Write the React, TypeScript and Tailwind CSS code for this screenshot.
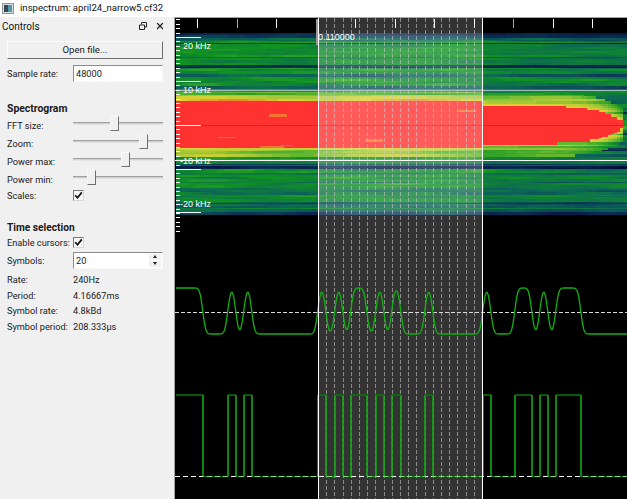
import React, { useMemo } from 'react';
import { X } from 'lucide-react';

const W = 452;
const H = 481;
// everything in the plot is in page coords minus this origin
const OX = 175;
const OY = 18;

const SEL_START = 318;
const SEL_END = 482;
const SYMBOLS = 20;

const EDGES = [203, 228, 236, 244, 252, 318, 326, 335, 343, 351, 367, 376, 384, 392, 401, 425, 433, 483, 491, 515, 532, 540, 548, 556, 581];

const STOPS: [number, number[]][] = [
  [0, [2, 6, 50]],
  [0.2, [10, 50, 85]],
  [0.36, [12, 100, 88]],
  [0.5, [16, 145, 35]],
  [0.62, [75, 175, 45]],
  [0.72, [165, 200, 55]],
  [0.82, [225, 210, 50]],
  [0.91, [240, 130, 50]],
  [1, [255, 50, 50]],
];

function colour(p: number) {
  const v = Math.max(0, Math.min(1, p));
  for (let i = 1; i < STOPS.length; i++) {
    if (v <= STOPS[i][0]) {
      const [a, ca] = STOPS[i - 1];
      const [b, cb] = STOPS[i];
      const t = (v - a) / (b - a);
      const c = ca.map((n, k) => Math.round(n + (cb[k] - n) * t));
      return `rgb(${c[0]},${c[1]},${c[2]})`;
    }
  }
  return 'rgb(255,50,50)';
}

function makeRandom(seed: number) {
  let s = seed;
  return () => {
    s = (s + 0x6d2b79f5) | 0;
    let t = Math.imul(s ^ (s >>> 15), 1 | s);
    t = (t + Math.imul(t ^ (t >>> 7), 61 | t)) ^ t;
    return ((t ^ (t >>> 14)) >>> 0) / 4294967296;
  };
}

function coreWidth(x: number) {
  if (x < 480) return 23;
  const t = Math.min(1, (x - 480) / 143);
  return 19 * Math.pow(Math.max(0, 1 - Math.pow(t, 5)), 0.7) + (t < 1 ? 0 : -8);
}

function buildSpectrogram() {
  const rnd = makeRandom(424);
  const byColour: Record<string, string> = {};
  let y = 33;
  while (y < 213) {
    const pick = rnd();
    const dark = pick >= 0.82;
    const h = dark ? (rnd() < 0.6 ? 1 : 2) : rnd() < 0.25 ? 1 : rnd() < 0.6 ? 2 : 3;
    let base = pick < 0.6 ? 0.46 + rnd() * 0.05 : pick < 0.82 ? 0.34 + rnd() * 0.08 : 0.14 + rnd() * 0.12;
    const edge = Math.min(1, Math.min(y - 33, 213 - y) / 6);
    base *= 0.3 + 0.7 * edge;
    const ph1 = rnd() * 6.28;
    const ph2 = rnd() * 6.28;
    const amp = 0.02 + rnd() * 0.03;
    const drop = rnd() < 0.25 ? 0.12 : 0;
    const jitter = (rnd() - 0.5) * 0.3;
    const streakAt = 190 + rnd() * 280;
    const streakLen = 4 + rnd() * 12;
    const hasStreak = rnd() < 0.3;
    const dy = Math.abs(y + h / 2 - 125);
    for (let x = 176; x < 627; x += 3) {
      let p = base + amp * Math.sin(x / 37 + ph1) + amp * 0.7 * Math.sin(x / 13 + ph2);
      if (x > 482) p -= 0.03 + (x - 482) * 0.0002;
      const w = coreWidth(x);
      const glow = w + 13;
      let sig = 0;
      if (dy < w) {
        sig = 1;
        // thin orange streaks run through the outer part of the core
        if (hasStreak && dy > 8 && Math.abs(x - streakAt) < streakLen) sig = 0.93;
      } else if (dy < glow) {
        sig = 0.82 - drop - ((dy - w) / 13) * 0.28 + jitter * (0.5 + 0.5 * Math.sin(x / 29 + ph1));
      }
      p = Math.max(p, sig);
      const c = colour(Math.round(p * 40) / 40);
      byColour[c] = (byColour[c] || '') + `M${x - OX} ${y - OY}h3v${h}h-3z`;
    }
    y += h;
  }
  return byColour;
}

function levelAt(x: number) {
  let high = true;
  for (const e of EDGES) {
    if (x >= e) high = !high;
  }
  return high ? 1 : -1;
}

function buildAnalog() {
  const sigma = 2.4;
  let d = '';
  for (let x = 176; x <= 627; x += 0.5) {
    let sum = 0;
    let weight = 0;
    for (let o = -8; o <= 8; o += 0.5) {
      const g = Math.exp(-(o * o) / (2 * sigma * sigma));
      sum += levelAt(x + o) * g;
      weight += g;
    }
    const v = sum / weight;
    const py = 311 - v * 23;
    d += `${d ? 'L' : 'M'}${x - OX} ${py - OY}`;
  }
  return d;
}

function Plot() {
  const spectrogram = useMemo(buildSpectrogram, []);
  const analog = useMemo(buildAnalog, []);

  const rulerTicks = Array.from({ length: 11 }, (_, i) => 197 + i * 39.5);
  const axisTicks = Array.from({ length: 49 }, (_, i) => 19.4 + i * 4.4);
  const majors = [37, 81, 125, 169, 212];
  const symbols = Array.from({ length: SYMBOLS - 1 }, (_, i) => SEL_START + (i + 1) * ((SEL_END - SEL_START) / SYMBOLS));

  const all = [176, ...EDGES, 627];
  const highs: string[] = [];
  const lows: string[] = [];
  const verts: string[] = [];
  all.slice(0, -1).forEach((x, i) => {
    const next = all[i + 1];
    const yy = (i % 2 === 0 ? 395 : 476.5) - OY;
    (i % 2 === 0 ? highs : lows).push(`M${x - OX} ${yy}L${next - OX} ${yy}`);
    if (i < all.length - 2) verts.push(`M${next - OX} ${395 - OY}L${next - OX} ${476.5 - OY}`);
  });

  return (
    <svg width={W} height={H} viewBox={`0 0 ${W} ${H}`} className="block bg-black font-['Liberation_Sans',sans-serif]">
      <g shapeRendering="crispEdges">
        {Object.entries(spectrogram).map(([c, d]) => (
          <path key={c} d={d} fill={c} />
        ))}
        <rect x={0} y={125 - OY} width={W} height={1} fill="#f01818" />
      </g>

      {/* time selection */}
      <rect x={SEL_START - OX} y={0} width={SEL_END - SEL_START} height={H} fill="#fff" fillOpacity={0.2} />
      <g shapeRendering="crispEdges">
        {symbols.map((x) => (
          <line key={x} x1={Math.round(x) - OX + 0.5} x2={Math.round(x) - OX + 0.5} y1={0} y2={H} stroke="#c8c8c8" strokeOpacity={0.6} strokeDasharray="4 2" />
        ))}
      </g>

      <g shapeRendering="crispEdges">
        <line x1={0} x2={W} y1={312.5 - OY} y2={312.5 - OY} stroke="#d8d8d8" strokeDasharray="4 2" />
        <line x1={0} x2={W} y1={476.5 - OY} y2={476.5 - OY} stroke="#fff" strokeDasharray="5 3" />
      </g>

      {/* traces */}
      <path d={analog} fill="none" stroke="#12b012" strokeWidth={1.3} />
      <g fill="none">
        <path d={verts.join('')} stroke="#12a812" strokeWidth={1.6} />
        <path d={highs.join('')} stroke="#0d760d" strokeWidth={1.6} />
        <path d={lows.join('')} stroke="#25d025" strokeOpacity={0.6} strokeWidth={1.2} />
      </g>
      <g shapeRendering="crispEdges">
        <line x1={0} x2={W} y1={90.5 - OY} y2={90.5 - OY} stroke="#b8c4d8" strokeOpacity={0.85} />
        <line x1={0} x2={W} y1={160.5 - OY} y2={160.5 - OY} stroke="#fff" />
        <line x1={SEL_START + 0.5 - OX} x2={SEL_START + 0.5 - OX} y1={0} y2={H} stroke="#fff" />
        <line x1={SEL_END + 0.5 - OX} x2={SEL_END + 0.5 - OX} y1={0} y2={H} stroke="#fff" />
      </g>

      {/* axes */}
      <g shapeRendering="crispEdges" stroke="#fff">
        {rulerTicks.map((x) => (
          <line key={x} x1={Math.round(x) - OX + 0.5} x2={Math.round(x) - OX + 0.5} y1={1} y2={10} stroke={x === 236.5 || x === 513 ? '#aaa' : '#fff'} />
        ))}
        <line x1={316.5 - OX} x2={316.5 - OX} y1={1} y2={27} stroke="#9a9a9a" strokeWidth={2} />
        {axisTicks.map((y) => (
          <line key={y} x1={1} x2={5} y1={Math.round(y) - OY + 0.5} y2={Math.round(y) - OY + 0.5} />
        ))}
        {majors.map((y) => (
          <line key={y} x1={1} x2={26} y1={y - OY + 0.5} y2={y - OY + 0.5} />
        ))}
      </g>
      <g fill="#fff" fontSize={9}>
        <text x={143} y={22}>0.110000</text>
        <text x={8} y={31}>20 kHz</text>
        <text x={8} y={75}>10 kHz</text>
        <text x={5} y={146}>-10 kHz</text>
        <text x={5} y={189}>-20 kHz</text>
      </g>
    </svg>
  );
}

const sunken = 'border border-t-[#8a8a8a] border-l-[#8a8a8a] border-r-[#f8f8f8] border-b-[#f8f8f8] bg-white';

function Row({ label, className, children, labelClass = 'pt-[1px]' }: { label: string; className: string; children?: React.ReactNode; labelClass?: string }) {
  return (
    <div className={`grid grid-cols-[66px_90px] items-center ${className}`}>
      <span className={`whitespace-nowrap ${labelClass}`}>{label}</span>
      {children}
    </div>
  );
}

function Slider({ label, thumb }: { label: string; thumb: number }) {
  return (
    <Row label={label} className="h-[18px]" labelClass="pt-[3px]">
      <div className="relative h-full">
        <div className="absolute inset-x-0 top-[7px] h-[3px] border-t border-t-[#a0a0a0] border-b border-b-[#e4e4e4] bg-[#d0d0d0]" />
        <div
          className="absolute top-[1px] h-[15px] w-[9px] border border-t-[#f8f8f8] border-l-[#f8f8f8] border-r-[#707070] border-b-[#707070] bg-[#f0f0f0]"
          style={{ left: thumb - 73 - 4 }}
        />
      </div>
    </Row>
  );
}

function Check() {
  return (
    <div className="flex h-[11px] w-[11px] items-center justify-center border border-t-[#7a7a7a] border-l-[#7a7a7a] border-r-[#d8d8d8] border-b-[#d8d8d8] bg-[#f6f6f6]">
      <svg width="9" height="9" viewBox="0 0 9 9">
        <path d="M1.2 4.2 L3.5 6.8 L7.8 1.4" fill="none" stroke="#111" strokeWidth="1.7" />
      </svg>
    </div>
  );
}

const SLIDERS = [
  { label: 'FFT size:', thumb: 114 },
  { label: 'Zoom:', thumb: 143 },
  { label: 'Power max:', thumb: 125 },
  { label: 'Power min:', thumb: 91 },
];

const INFO = [
  { label: 'Rate:', value: '240Hz' },
  { label: 'Period:', value: '4.16667ms' },
  { label: 'Symbol rate:', value: '4.8kBd' },
  { label: 'Symbol period:', value: '208.333µs' },
];

export default function App() {
  return (
    <div className="flex h-[499px] w-[627px] flex-col overflow-hidden bg-[#f0f0f0] font-['Roboto',sans-serif] text-[9.2px] text-[#1a1a1a]">
      {/* Title bar */}
      <div className="flex h-[18px] items-center gap-[6px] bg-white pl-[2px]">
        <svg width="12" height="11" viewBox="0 0 12 11">
          <rect x="0.5" y="0.5" width="11" height="10" fill="#d8dfe2" stroke="#8c979c" />
          <rect x="2" y="2" width="4" height="7" fill="#3a4750" />
          <rect x="6" y="2" width="4" height="7" fill="#4f9aa8" />
        </svg>
        <span className="text-[9.6px] text-[#111]">inspectrum: april24_narrow5.cf32</span>
      </div>

      <div className="flex flex-1">
        {/* Controls */}
        <aside className="w-[174px] px-[7px]">
          <div className="-mx-[5px] flex h-[18px] items-center justify-between pr-[7px] text-[#111]">
            <span className="text-[10px]">Controls</span>
            <div className="flex items-center gap-[8px]">
              <svg width="8" height="8" viewBox="0 0 8 8">
                <path d="M2.5 2.5V.5h5v4.5h-2M.5 3h5v4.5h-5z" fill="none" stroke="#222" />
              </svg>
              <X size={10} strokeWidth={3} color="#222" />
            </div>
          </div>

          <button className="mt-[6px] block h-[18px] w-[156px] border border-t-[#fcfcfc] border-l-[#fcfcfc] border-r-[#6e6e6e] border-b-[#6e6e6e] bg-[#f0f0f0] pt-[1px] text-center text-[9.6px]">
            Open file...
          </button>

          <Row label="Sample rate:" className="mt-[6px] h-[15px]">
            <div className={`flex h-full items-center pl-[2px] pt-[1px] ${sunken}`}>48000</div>
          </Row>

          <div className="mt-[19px] flex h-[16px] items-center pt-[3px] text-[10.4px] font-bold">Spectrogram</div>
          {SLIDERS.map((s) => (
            <Slider key={s.label} label={s.label} thumb={s.thumb} />
          ))}
          <Row label="Scales:" className="h-[16px]">
            <Check />
          </Row>

          <div className="mt-[16px] flex h-[16px] items-center pt-[2px] text-[10.2px] font-bold">Time selection</div>
          <Row label="Enable cursors:" className="h-[14px]">
            <Check />
          </Row>
          <Row label="Symbols:" className="mt-[3px] h-[16px]">
            <div className={`flex h-full items-center justify-between pl-[2px] pr-[1px] ${sunken}`}>
              <span className="pt-[1px]">20</span>
              <div className="flex h-[13px] w-[12px] flex-col justify-between">
                <div className="flex h-[6px] items-center justify-center bg-[#f0f0f0]">
                  <div className="h-0 w-0 border-x-[2.5px] border-b-[3px] border-x-transparent border-b-[#222]" />
                </div>
                <div className="flex h-[6px] items-center justify-center bg-[#f0f0f0]">
                  <div className="h-0 w-0 border-x-[2.5px] border-t-[3px] border-x-transparent border-t-[#222]" />
                </div>
              </div>
            </div>
          </Row>
          <div className="mt-[4px]">
            {INFO.map((r) => (
              <Row key={r.label} label={r.label} className="h-[15.5px]">
                <span className="pt-[1px]">{r.value}</span>
              </Row>
            ))}
          </div>
        </aside>

        {/* Plot */}
        <div className="border-l border-t border-[#a4a4a4]">
          <Plot />
        </div>
      </div>
    </div>
  );
}
